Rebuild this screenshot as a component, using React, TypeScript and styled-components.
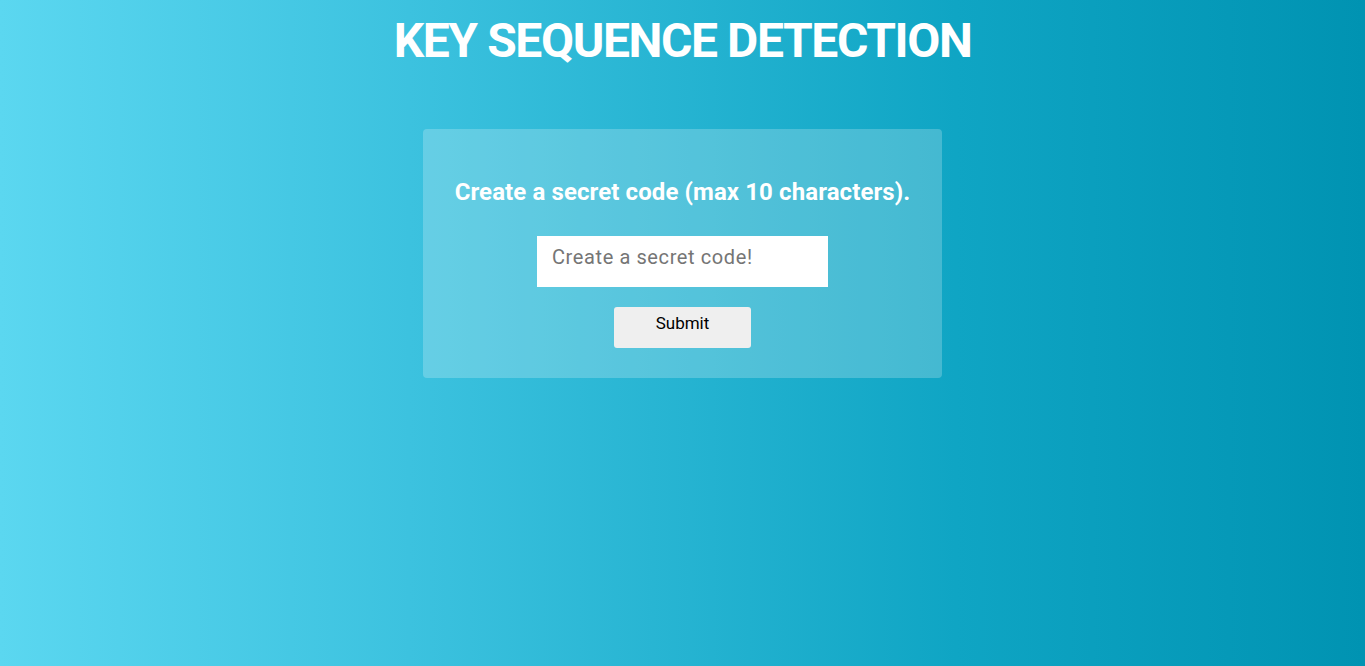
import React, { useState } from 'react';
import styled, { createGlobalStyle } from 'styled-components';

const GlobalStyle = createGlobalStyle`
  html, body {
    margin: 0;
    padding: 0;
    height: 100%;
  }

  body {
    font-family: Roboto, 'Liberation Sans', sans-serif;
    background: linear-gradient(to right, #5bd7f0 0%, #3cc2df 30%, #0fa5c4 70%, #0093b2 100%);
    min-height: 666px;
  }
`;

const Page = styled.main`
  display: flex;
  flex-direction: column;
  align-items: center;
  min-height: 666px;
  padding-top: 11px;
  box-sizing: border-box;
`;

const Title = styled.h1`
  margin: 0;
  font-size: 48px;
  line-height: 60px;
  font-weight: 700;
  letter-spacing: -1.4px;
  color: #fff;
`;

const Card = styled.form`
  margin-top: 58px;
  width: 519px;
  box-sizing: border-box;
  padding: 49px 20px 30px;
  display: flex;
  flex-direction: column;
  align-items: center;
  background: rgba(255, 255, 255, 0.22);
  border-radius: 4px;
`;

const Heading = styled.h2`
  margin: 0;
  font-size: 24px;
  line-height: 28px;
  font-weight: 700;
  letter-spacing: 0.1px;
  color: #fff;
`;

const CodeInput = styled.input`
  margin-top: 30px;
  width: 291px;
  height: 51px;
  box-sizing: border-box;
  border: none;
  outline: none;
  padding: 0 15px 10px;
  font-family: Roboto, 'Liberation Sans', sans-serif;
  font-size: 20px;
  letter-spacing: 0.6px;
  color: #333;

  &::placeholder {
    color: #757575;
  }
`;

const SubmitButton = styled.button`
  margin-top: 20px;
  width: 137px;
  height: 41px;
  padding: 0 0 10px;
  border: none;
  border-radius: 3px;
  background: #efefef;
  font-family: Roboto, 'Liberation Sans', sans-serif;
  font-size: 17px;
  color: #000;
  cursor: pointer;
`;

export default function App() {
  const [code, setCode] = useState('');

  return (
    <>
      <GlobalStyle />
      <Page>
        <Title>KEY SEQUENCE DETECTION</Title>
        <Card onSubmit={(e) => e.preventDefault()}>
          <Heading>Create a secret code (max 10 characters).</Heading>
          <CodeInput
            type="text"
            maxLength={10}
            value={code}
            placeholder="Create a secret code!"
            onChange={(e) => setCode(e.target.value)}
          />
          <SubmitButton type="submit">Submit</SubmitButton>
        </Card>
      </Page>
    </>
  );
}
